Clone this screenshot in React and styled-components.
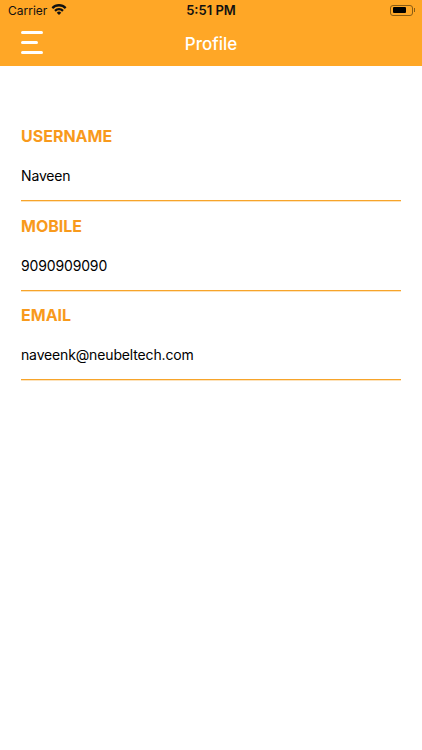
import React from "react";
import styled, { createGlobalStyle } from "styled-components";

const fields = [
	{ label: "USERNAME", value: "Naveen" },
	{ label: "MOBILE", value: "9090909090" },
	{ label: "EMAIL", value: "naveenk@neubeltech.com" },
];

const App = () => (
	<Screen>
		<GlobalStyle />
		<Header>
			<StatusBar>
				<Carrier>
					Carrier
					<svg width="16" height="12" viewBox="0 0 18 13" preserveAspectRatio="none">
						<path d="M0.6 4.6 A12 12 0 0 1 17.4 4.6 L15.6 6.5 A9.5 9.5 0 0 0 2.4 6.5 Z" fill="#111" />
						<path d="M3.6 7.6 A8 8 0 0 1 14.4 7.6 L12.6 9.4 A5.4 5.4 0 0 0 5.4 9.4 Z" fill="#111" />
						<path d="M6.5 10.5 A3.6 3.6 0 0 1 11.5 10.5 L9 13 Z" fill="#111" />
					</svg>
				</Carrier>
				<Clock>5:51 PM</Clock>
				<Battery>
					<BatteryShell>
						<BatteryLevel />
					</BatteryShell>
					<BatteryCap />
				</Battery>
			</StatusBar>
			<NavBar>
				<MenuButton>
					<MenuLine />
					<MenuLine $short />
					<MenuLine />
				</MenuButton>
				<Title>Profile</Title>
			</NavBar>
		</Header>
		<Form>
			{fields.map((field) => (
				<Field key={field.label}>
					<Label>{field.label}</Label>
					<Value>{field.value}</Value>
				</Field>
			))}
		</Form>
	</Screen>
);

export default App;

const GlobalStyle = createGlobalStyle`
	html, body {
		margin: 0;
		padding: 0;
		background: #fff;
	}
	body {
		font-family: "Inter", "Liberation Sans", sans-serif;
	}
`;

const Screen = styled.div`
	width: 422px;
	height: 750px;
	background: #fff;
	overflow: hidden;
`;

const Header = styled.header`
	height: 66px;
	background: #ffa726;
`;

const StatusBar = styled.div`
	height: 22px;
	display: grid;
	grid-template-columns: 1fr auto 1fr;
	align-items: center;
	padding: 0 8px 2px;
	box-sizing: border-box;
	color: #111;
`;

const Carrier = styled.div`
	display: flex;
	align-items: center;
	gap: 4px;
	font-size: 12px;
	svg {
		margin-top: -3px;
	}
`;

const Clock = styled.div`
	font-size: 13px;
	font-weight: 600;
`;

const Battery = styled.div`
	justify-self: end;
	display: flex;
	align-items: center;
	gap: 1px;
	margin-right: -1px;
`;

const BatteryShell = styled.div`
	width: 23px;
	height: 11px;
	padding: 1.5px;
	box-sizing: border-box;
	border: 1px solid #8a5c14;
	border-radius: 3px;
`;

const BatteryLevel = styled.div`
	width: 76%;
	height: 100%;
	background: #000;
	border-radius: 1px;
`;

const BatteryCap = styled.div`
	width: 1px;
	height: 4px;
	background: #8a5c14;
`;

const NavBar = styled.div`
	position: relative;
	height: 44px;
	display: flex;
	align-items: center;
	justify-content: center;
`;

const MenuButton = styled.div`
	position: absolute;
	left: 21px;
	top: 9px;
	width: 22px;
	height: 23px;
	display: flex;
	flex-direction: column;
	justify-content: space-between;
`;

const MenuLine = styled.span`
	display: block;
	height: 3px;
	width: ${(props) => (props.$short ? "17px" : "22px")};
	background: #fff;
	border-radius: 1.5px;
`;

const Title = styled.div`
	color: #fff;
	font-size: 17px;
	font-weight: 500;
	margin-top: -1px;
`;

const Form = styled.main`
	padding: 58px 21px 0;
	display: grid;
	grid-auto-rows: 89.5px;
`;

const Field = styled.div`
	display: flex;
	flex-direction: column;
`;

const Label = styled.div`
	color: #f89a1c;
	font-size: 16px;
	font-weight: 700;
	line-height: 24px;
`;

const Value = styled.div`
	color: #000;
	font-size: 14px;
	letter-spacing: -0.15px;
	line-height: 20px;
	padding: 18px 0 14px;
	border-bottom: 1px solid #f7a42a;
	box-shadow: 0 1px 0 #fde3bc;
`;
